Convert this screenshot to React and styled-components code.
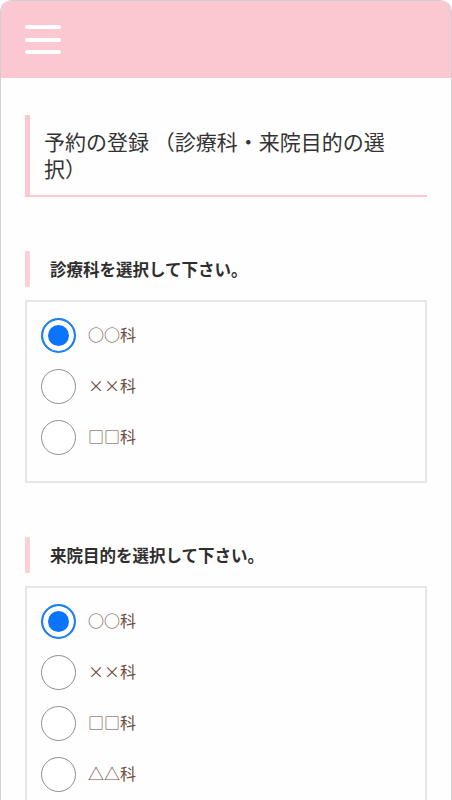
import React, { useState } from 'react';
import styled, { createGlobalStyle } from 'styled-components';

const GlobalStyle = createGlobalStyle`
  html, body {
    margin: 0;
    padding: 0;
    background: #ffffff;
  }
  body {
    font-family: "Noto Sans CJK JP", "Noto Sans", sans-serif;
  }
  * {
    box-sizing: border-box;
  }
`

const Frame = styled.div`
  width: 452px;
  min-height: 800px;
  border: 1px solid #cfcfcf;
  border-bottom: none;
  border-radius: 12px 12px 0 0;
  overflow: hidden;
  background: #fefefe;
`

const Header = styled.header`
  height: 77px;
  background: #fbc8d2;
  display: flex;
  align-items: center;
  padding-left: 24px;
`

const Burger = styled.div`
  display: flex;
  flex-direction: column;
  gap: 8.5px;

  span {
    display: block;
    width: 36px;
    height: 4px;
    border-radius: 2px;
    background: #ffffff;
  }
`

const Main = styled.main`
  padding: 37px 24px 0;
`

const PageTitle = styled.h1`
  margin: 0;
  font-size: 21px;
  font-weight: 400;
  line-height: 27px;
  color: #333333;
  padding: 13px 22px 13px 14px;
  border-left: 5px solid #fbc8d2;
  border-bottom: 2px solid #fbc8d2;
`

const Section = styled.section`
  margin-top: 54px;
`

const SectionTitle = styled.h2`
  margin: 0;
  height: 36px;
  display: flex;
  align-items: center;
  padding-left: 20px;
  border-left: 5px solid #fbd0d8;
  font-size: 16.5px;
  font-weight: 700;
  color: #2e2e2e;
`

const OptionBox = styled.div`
  margin-top: 13px;
  border: 2px solid #e6e6e6;
  padding: 16px 14px 26px;
  display: flex;
  flex-direction: column;
  gap: 16px;
`

const Option = styled.label`
  display: flex;
  align-items: center;
  gap: 12px;
  height: 35px;
  font-size: 16px;
  line-height: 1;
  color: #6f4d3f;
  cursor: pointer;
`

const OptionText = styled.span`
  margin-top: -3px;
`

const Radio = styled.input.attrs({ type: 'radio' })`
  appearance: none;
  -webkit-appearance: none;
  margin: 0;
  width: 35px;
  height: 35px;
  flex: none;
  border-radius: 50%;
  border: 1.5px solid #8f8f8f;
  background: #ffffff;

  &:checked {
    border: 2px solid #1c7ff5;
    background: #0a74ff;
    box-shadow: inset 0 0 0 5px #ffffff;
  }
`

const RadioGroup = ({ name, options }) => {
  const [value, setValue] = useState(options[0])
  return (
    <OptionBox>
      {options.map(o => (
        <Option key={o}>
          <Radio name={name} checked={value === o} onChange={() => setValue(o)} />
          <OptionText>{o}</OptionText>
        </Option>
      ))}
    </OptionBox>
  )
}

const App = () => {
  return (
    <>
      <GlobalStyle />
      <Frame>
        <Header>
          <Burger>
            <span />
            <span />
            <span />
          </Burger>
        </Header>
        <Main>
          <PageTitle>予約の登録 （診療科・来院目的の選択）</PageTitle>
          <Section>
            <SectionTitle>診療科を選択して下さい。</SectionTitle>
            <RadioGroup name="dept" options={['○○科', '××科', '□□科']} />
          </Section>
          <Section>
            <SectionTitle>来院目的を選択して下さい。</SectionTitle>
            <RadioGroup name="purpose" options={['○○科', '××科', '□□科', '△△科']} />
          </Section>
        </Main>
      </Frame>
    </>
  );
};

export default App;
